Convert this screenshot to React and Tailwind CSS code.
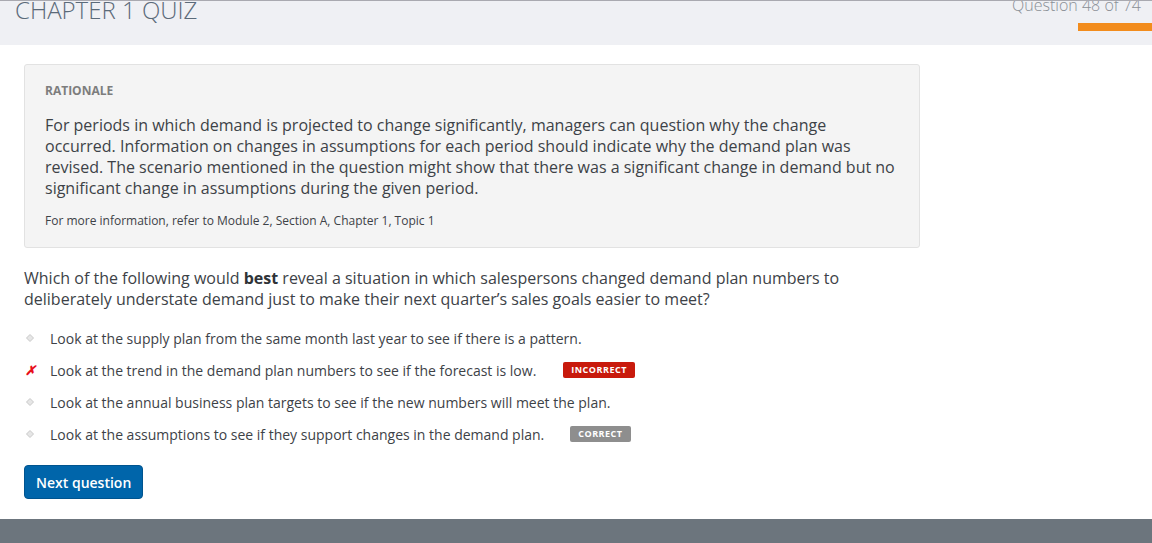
const options = [
    { text: 'Look at the supply plan from the same month last year to see if there is a pattern.' },
    { text: 'Look at the trend in the demand plan numbers to see if the forecast is low.', wrong: true },
    { text: 'Look at the annual business plan targets to see if the new numbers will meet the plan.' },
    { text: 'Look at the assumptions to see if they support changes in the demand plan.', right: true },
]

function Bullet() {
    return (
        <svg width="8" height="8" viewBox="0 0 8 8">
            <path d="M4 0.5 L7.5 4 L4 7.5 L0.5 4 Z" fill="#e6e6e6" stroke="#c8c8c8" strokeWidth="1" />
        </svg>
    )
}

export default function App() {
    return (
        <div className="w-[1152px] h-[543px] overflow-hidden bg-white flex flex-col font-['Open_Sans',sans-serif] text-[#3f4449]">
            {/* header */}
            <div className="h-[45px] shrink-0 bg-[#eff0f4] border-t border-[#a9a9b0] flex justify-between overflow-hidden">
                <div className="pl-[15px] -mt-[7px] text-[24px] font-light text-[#5b6a79] leading-[32px]">CHAPTER 1 QUIZ</div>
                <div className="flex flex-col items-end -mt-[7px]">
                    <div className="pr-[11px] text-[16px] font-light text-[#8a8f96] leading-[22px]">Question 48 of 74</div>
                    <div className="mt-[7px] w-[74px] h-[8px] bg-[#f28c1c]" />
                </div>
            </div>

            <div className="flex-1 pl-[24px] pt-[19px]">
                {/* rationale */}
                <div className="w-[896px] bg-[#f4f4f4] border border-[#e2e2e2] rounded-[3px] pl-[20px] pr-[20px] pt-[18px] pb-[18px]">
                    <div className="text-[12px] font-bold text-[#7d7d7d] leading-[16px]">RATIONALE</div>
                    <p className="mt-[16px] text-[16px] leading-[21px] text-[#3d4247]">
                        For periods in which demand is projected to change significantly, managers can question why the change occurred. Information on changes in assumptions for each period should indicate why the demand plan was revised. The scenario mentioned in the question might show that there was a significant change in demand but no significant change in assumptions during the given period.
                    </p>
                    <p className="mt-[14px] text-[12px] leading-[16px] text-[#3d4247]">For more information, refer to Module 2, Section A, Chapter 1, Topic 1</p>
                </div>

                {/* question */}
                <p className="mt-[20px] w-[830px] text-[16px] leading-[21px] text-[#3d4247]">
                    Which of the following would <b className="font-bold text-[#2f3337]">best</b> reveal a situation in which salespersons changed demand plan numbers to deliberately understate demand just to make their next quarter’s sales goals easier to meet?
                </p>

                <ul className="mt-[12px] flex flex-col">
                    {options.map((o, i) => (
                        <li key={i} className="h-[32px] flex items-center text-[14px] text-[#3d4247]">
                            <span className="w-[26px] flex items-center pl-[1px]">
                                {o.wrong
                                    ? <span className="text-[#e8101a] text-[13px] font-bold italic leading-none">✗</span>
                                    : <span className="pl-[1px] flex"><Bullet /></span>}
                            </span>
                            <span>{o.text}</span>
                            {o.wrong && (
                                <span className="ml-[27px] h-[16px] px-[8px] flex items-center rounded-[2px] bg-[#c81a0c] text-white text-[9px] font-bold tracking-[0.5px]">INCORRECT</span>
                            )}
                            {o.right && (
                                <span className="ml-[26px] h-[16px] px-[8px] flex items-center rounded-[2px] bg-[#8e8e8e] text-white text-[9px] font-bold tracking-[0.5px]">CORRECT</span>
                            )}
                        </li>
                    ))}
                </ul>

                <button className="mt-[15px] h-[34px] px-[11px] bg-[#0065aa] border border-[#00548f] rounded-[4px] text-white text-[14px] font-semibold">
                    Next question
                </button>
            </div>

            <div className="h-[24px] shrink-0 bg-[#6c757d]" />
        </div>
    )
}
